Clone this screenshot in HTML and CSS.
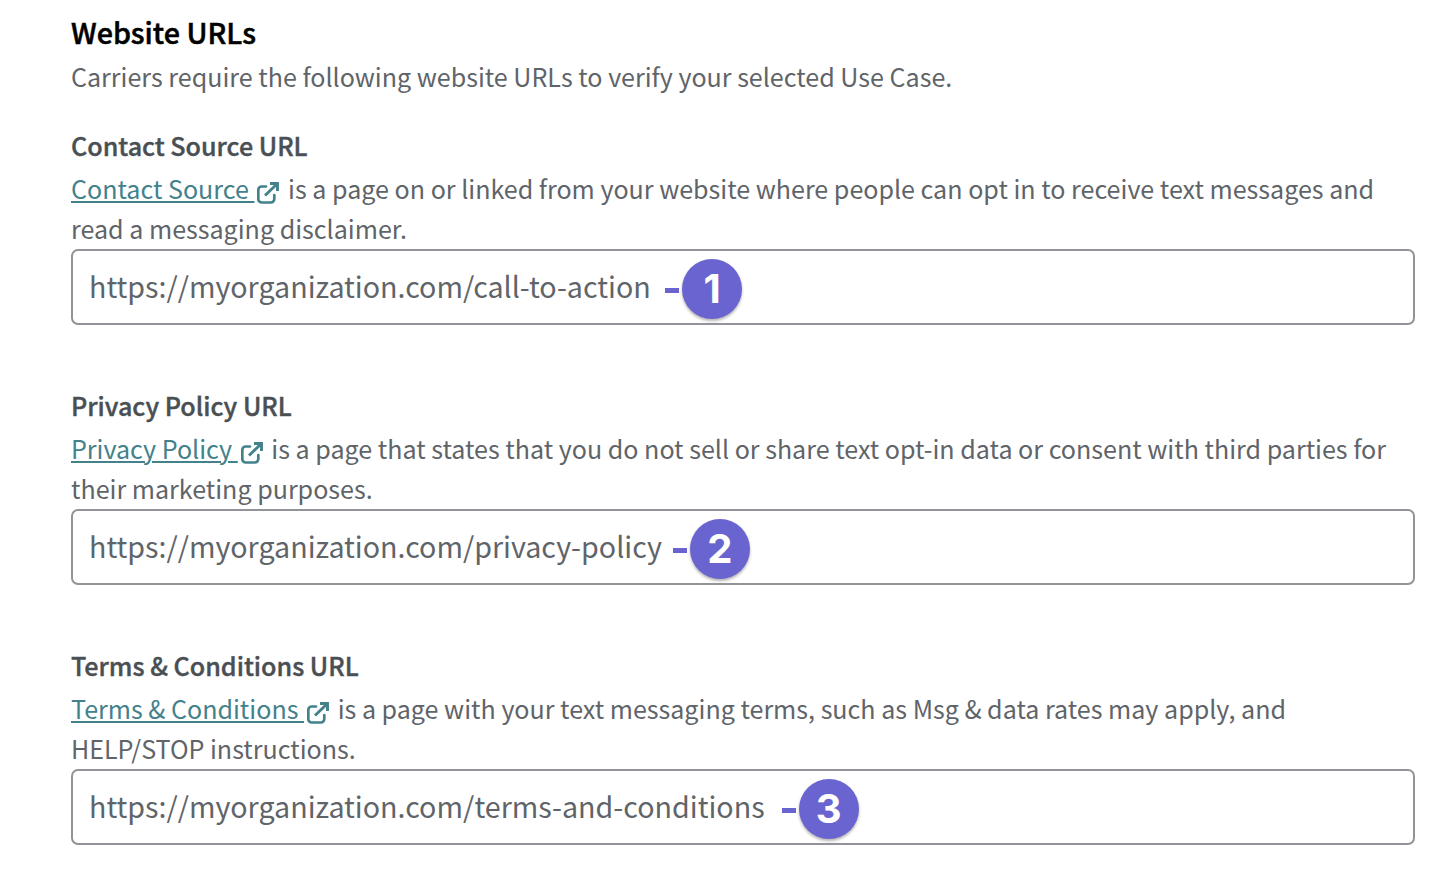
FILE: index.html
```html
<!DOCTYPE html>
<html lang="en">
<head>
<meta charset="utf-8">
<title>Website URLs</title>
<link rel="stylesheet" href="styles.css">
</head>
<body>
<main class="form">
  <h1 class="title">Website URLs</h1>
  <p class="intro">Carriers require the following website URLs to verify your selected Use Case.</p>

  <section class="field">
    <h2 class="label">Contact Source URL</h2>
    <p class="help"><a class="link">Contact Source </a><svg class="ext" viewBox="0 0 22 22"><path d="M9 4.500H4.800A3.500 3.500 0 0 0 1.300 8v9a3.500 3.500 0 0 0 3.500 3.500h9A3.500 3.500 0 0 0 17.300 17v-4"/><path class="arrow" d="M13 1.500H20.500V9M20 2 8 13.500"/></svg> is a page on or linked from your website where people can opt in to receive text messages and<br>read a messaging disclaimer.</p>
    <div class="input"><span class="value">https://myorganization.com/call-to-action</span><span class="marker"><i class="dash"></i><b class="badge">1</b></span></div>
  </section>

  <section class="field">
    <h2 class="label">Privacy Policy URL</h2>
    <p class="help"><a class="link">Privacy Policy </a><svg class="ext" viewBox="0 0 22 22"><path d="M9 4.500H4.800A3.500 3.500 0 0 0 1.300 8v9a3.500 3.500 0 0 0 3.500 3.500h9A3.500 3.500 0 0 0 17.300 17v-4"/><path class="arrow" d="M13 1.500H20.500V9M20 2 8 13.500"/></svg> is a page that states that you do not sell or share text opt-in data or consent with third parties for<br>their marketing purposes.</p>
    <div class="input"><span class="value">https://myorganization.com/privacy-policy</span><span class="marker marker-near"><i class="dash"></i><b class="badge">2</b></span></div>
  </section>

  <section class="field">
    <h2 class="label">Terms &amp; Conditions URL</h2>
    <p class="help"><a class="link">Terms &amp; Conditions </a><svg class="ext" viewBox="0 0 22 22"><path d="M9 4.500H4.800A3.500 3.500 0 0 0 1.300 8v9a3.500 3.500 0 0 0 3.500 3.500h9A3.500 3.500 0 0 0 17.300 17v-4"/><path class="arrow" d="M13 1.500H20.500V9M20 2 8 13.500"/></svg> is a page with your text messaging terms, such as Msg &amp; data rates may apply, and<br>HELP/STOP instructions.</p>
    <div class="input"><span class="value">https://myorganization.com/terms-and-conditions</span><span class="marker marker-far"><i class="dash"></i><b class="badge">3</b></span></div>
  </section>
</main>
</body>
</html>
```

FILE: styles.css
```css
* { box-sizing: border-box; }
body {
  margin: 0;
  background: #fff;
  color: #5f6469;
  font-family: "Noto Sans CJK SC", "Open Sans", sans-serif;
  font-size: 25.07px;
}
.form { padding: 12px 39px 0 71px; white-space: nowrap; }
h1, h2, p { margin: 0; }
.title { height: 44px; line-height: 40px; font-size: 28.7px; font-weight: 500; color: #000; -webkit-text-stroke: 0.5px; }
.intro { height: 69px; line-height: 40px; }
.field { height: 260px; }
.label { height: 43px; line-height: 40px; font-size: 25.1px; font-weight: 500; color: #4a4f54; -webkit-text-stroke: 0.4px; }
.help { height: 81px; line-height: 40px; }
.link { color: #43818b; text-decoration: underline; text-decoration-thickness: 2px; text-underline-offset: 2px; white-space: pre; }
.ext {
  width: 22px;
  height: 22px;
  margin: 0 3px;
  vertical-align: -5px;
  fill: none;
  stroke: #43818b;
  stroke-width: 2.7;
  stroke-linecap: round;
  stroke-linejoin: round;
}
.arrow { stroke-width: 2.9; stroke-linecap: butt; stroke-linejoin: miter; }
.input {
  display: flex;
  align-items: center;
  height: 76px;
  padding-left: 16px;
  border: 2px solid #919599;
  border-radius: 7px;
}
.value { font-size: 28.65px; line-height: 40px; margin-top: -2px; }
.marker { display: flex; align-items: center; margin: 3px 0 0 14.3px; }
.marker-near { margin-left: 11px; }
.marker-far { margin-left: 17px; }
.dash { width: 14px; height: 5px; margin-top: 3px; background: #6a64d1; }
.badge {
  width: 60px;
  height: 60px;
  margin-left: 3px;
  border-radius: 50%;
  background: #6a64d1;
  box-shadow: 0 2px 3px rgba(0,0,0,.3);
  color: #fff;
  font: 700 40px/60px Inter, sans-serif;
  text-align: center;
}
```
